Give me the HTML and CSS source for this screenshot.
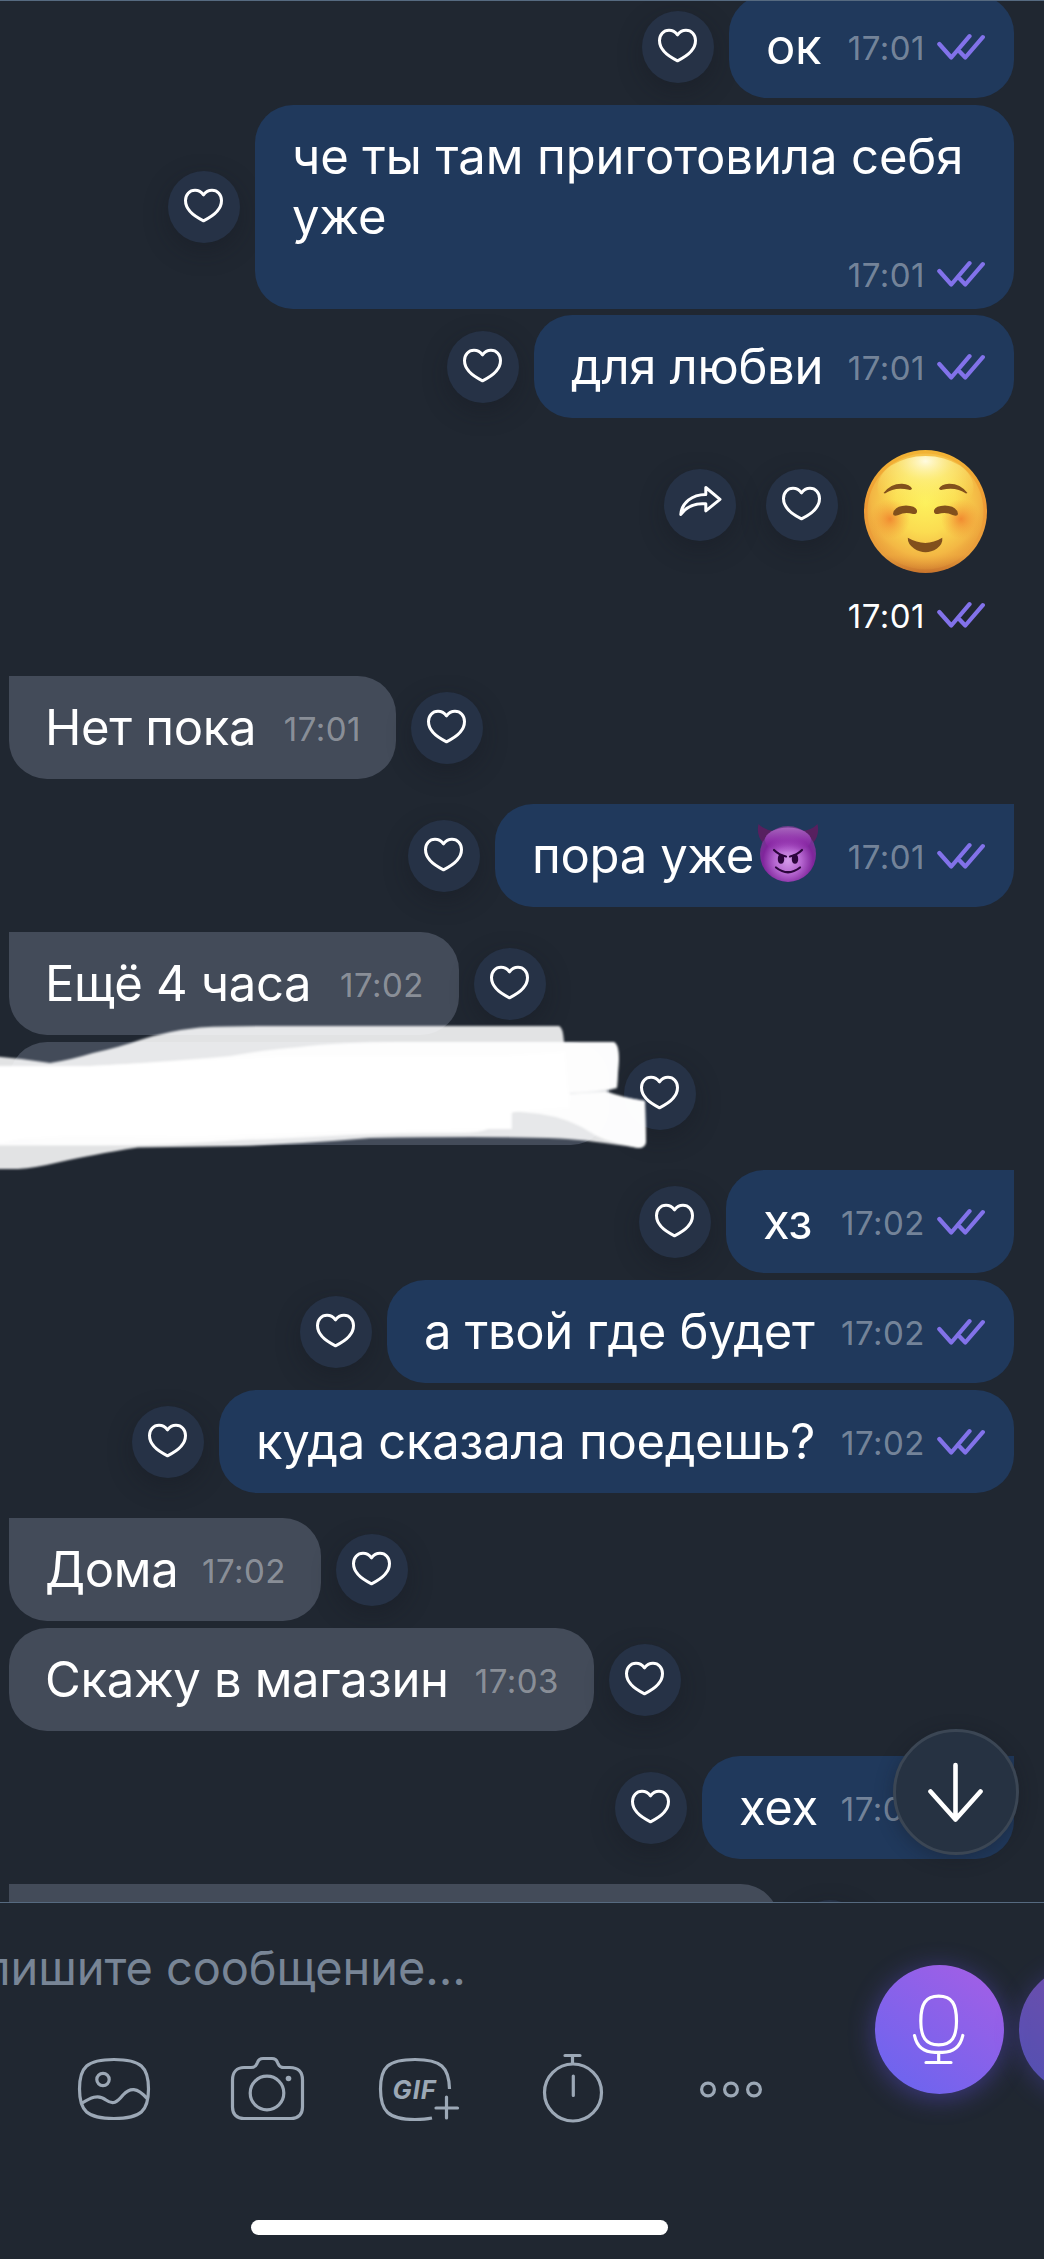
FILE: index.html
```html
<!DOCTYPE html>
<html lang="ru">
<head>
<meta charset="utf-8">
<title>Чат</title>
<link rel="stylesheet" href="styles.css">
</head>
<body>
<svg class="sprite" aria-hidden="true">
  <symbol id="heart" viewBox="0 0 72 72"><path d="M35.5 23.8C33.5 21 30.5 19.3 27 19.3C21.5 19.3 17.5 23.6 17.5 29.6C17.5 38 26 45.3 35.5 49.8C45 45.3 53.5 38 53.5 29.6C53.5 23.6 49.5 19.3 44 19.3C40.5 19.3 37.5 21 35.5 23.8Z"/></symbol>
  <symbol id="share" viewBox="0 0 72 72"><path d="M41.8 18.5L56 30.3L41.8 41.8V34.8C31 33.8 22.500 37.5 16.800 45.500C17.500 34 28 25.500 41.800 25.500Z"/></symbol>
  <symbol id="checks" viewBox="0 0 48 28"><path d="M2.300 11L14.300 24.500L32.500 3.200M22.800 18.700L28.300 24.500L45.800 4.200"/></symbol>
</svg>

<main class="chat">
  <div class="row out">
    <button class="act"><svg><use href="#heart"/></svg></button>
    <div class="bubble w-ok"><p>ок</p><span class="meta"><time>17:01</time><svg class="checks"><use href="#checks"/></svg></span></div>
  </div>
  <div class="row out">
    <button class="act"><svg><use href="#heart"/></svg></button>
    <div class="bubble tall w-che"><p>че ты там приготовила себя<br>уже</p><span class="meta"><time>17:01</time><svg class="checks"><use href="#checks"/></svg></span></div>
  </div>
  <div class="row out tight">
    <button class="act"><svg><use href="#heart"/></svg></button>
    <div class="bubble w-dlya"><p>для любви</p><span class="meta"><time>17:01</time><svg class="checks"><use href="#checks"/></svg></span></div>
  </div>

  <div class="sticker">
    <div class="sticker-line">
      <button class="act"><svg><use href="#share"/></svg></button>
      <button class="act"><svg><use href="#heart"/></svg></button>
      <svg class="smile" viewBox="0 0 123 123">
        <defs>
          <linearGradient id="rim" x1="0" y1="0" x2="0" y2="1"><stop offset="0" stop-color="#f2b434"/><stop offset=".45" stop-color="#ee9a35"/><stop offset=".85" stop-color="#e9a03c"/><stop offset="1" stop-color="#c8742c"/></linearGradient>
          <radialGradient id="face" cx=".5" cy=".42" r=".58"><stop offset="0" stop-color="#fdf15c"/><stop offset=".45" stop-color="#fbdc51"/><stop offset=".8" stop-color="#f3b744"/><stop offset="1" stop-color="#eca43c" stop-opacity=".2"/></radialGradient>
          <radialGradient id="shine" cx=".5" cy=".08" r=".75"><stop offset="0" stop-color="#fffbe0"/><stop offset=".4" stop-color="#fdf48c" stop-opacity=".6"/><stop offset="1" stop-color="#fdf060" stop-opacity="0"/></radialGradient>
          <radialGradient id="blush"><stop offset="0" stop-color="#f07f2c" stop-opacity=".85"/><stop offset="1" stop-color="#f29a38" stop-opacity="0"/></radialGradient>
        </defs>
        <circle cx="61.500" cy="61.500" r="61.500" fill="url(#rim)"/>
        <circle cx="61.500" cy="61.500" r="58" fill="url(#face)"/>
        <ellipse cx="61.500" cy="38" rx="48" ry="32" fill="url(#shine)"/>
        <circle cx="26" cy="69" r="20" fill="url(#blush)"/><circle cx="97" cy="69" r="20" fill="url(#blush)"/>
        <path class="brown" d="M19.500 43Q27 33.500 38 33.800Q46 34.500 48 38.500Q47.500 40.500 45 39.800Q31 36.500 21 43.500ZM103.500 43Q96 33.500 85 33.800Q77 34.500 75 38.500Q75.500 40.500 78 39.800Q92 36.500 102 43.500Z"/>
        <path class="brown" d="M29 64Q30 56 42 55.500Q52 56 53 60.500Q53.500 64.500 49 64Q41 61.500 34.500 65Q29.500 67 29 64ZM94 64Q93 56 81 55.500Q71 56 70 60.500Q69.500 64.500 74 64Q82 61.500 88.500 65Q93.500 67 94 64Z"/>
        <path class="brown" d="M43.800 87.800Q61.500 98 78.300 87.800Q79 94 73 98.500Q61.500 106 50 98.500Q43.500 94 43.800 87.800Z"/>
      </svg>
    </div>
    <span class="meta"><time>17:01</time><svg class="checks"><use href="#checks"/></svg></span>
  </div>

  <div class="row in turn">
    <div class="bubble first w-net"><p>Нет пока</p><span class="meta"><time>17:01</time></span></div>
    <button class="act"><svg><use href="#heart"/></svg></button>
  </div>
  <div class="row out turn">
    <button class="act"><svg><use href="#heart"/></svg></button>
    <div class="bubble first w-pora"><p>пора уже<svg class="imp" viewBox="0 0 62 60">
      <defs>
        <radialGradient id="impf" cx=".5" cy=".62" r=".6"><stop offset="0" stop-color="#d49bea"/><stop offset=".4" stop-color="#b566d0"/><stop offset=".75" stop-color="#80259c"/><stop offset="1" stop-color="#6d3c8c"/></radialGradient>
        <linearGradient id="imps" x1="0" y1="0" x2="0" y2="1"><stop offset="0" stop-color="#a765bd"/><stop offset=".5" stop-color="#9435ae" stop-opacity=".8"/><stop offset="1" stop-color="#8a1aa5" stop-opacity="0"/></linearGradient>
      </defs>
      <path fill="#57205f" d="M1.500 1Q-1 12 6 20L17 8Q7 7 1.500 1ZM60.500 1Q63 12 56 20L45 8Q55 7 60.500 1Z"/>
      <circle cx="31" cy="31" r="28" fill="url(#impf)"/>
      <ellipse cx="31" cy="17" rx="23" ry="12.500" fill="url(#imps)"/>
      <path fill="none" stroke="#2c063c" stroke-width="2.200" stroke-linecap="round" d="M17 27Q22 32 29 33.500M45 27Q40 32 33 33.500M19 44.500Q31 54 43 44.500"/>
      <ellipse cx="24" cy="36" rx="3.200" ry="4.800" fill="#2c063c"/><ellipse cx="38" cy="36" rx="3.200" ry="4.800" fill="#2c063c"/>
    </svg></p><span class="meta"><time>17:01</time><svg class="checks"><use href="#checks"/></svg></span></div>
  </div>
  <div class="row in turn">
    <div class="bubble first w-4h"><p>Ещё 4 часа</p><span class="meta"><time>17:02</time></span></div>
    <button class="act"><svg><use href="#heart"/></svg></button>
  </div>
  <div class="row in">
    <div class="bubble w-hidden"></div>
    <button class="act"><svg><use href="#heart"/></svg></button>
    <svg class="scribble" viewBox="0 1010 660 170">
      <defs><filter id="soft" x="-5%" y="-10%" width="110%" height="120%"><feGaussianBlur stdDeviation="1.200"/></filter></defs>
      <g filter="url(#soft)">
        <path fill="#fff" fill-opacity=".87" d="M-10 1056Q20 1058 50 1063Q70 1060 93 1053Q120 1047 140 1040Q167 1031 200 1027.500Q225 1026 260 1026H559Q563 1027 564 1042H614Q619 1044 619 1060L617 1088L606 1091Q620 1097 645 1101L646 1142Q645 1148 638 1148Q590 1140 560 1138.500Q500 1136 370 1138Q300 1144 240 1146L138 1147.500Q90 1155 60 1162Q35 1168 18 1169H-10Z"/>
        <path fill="#fff" fill-opacity=".9" d="M-10 1066H90Q150 1063 230 1056Q270 1049 300 1047Q340 1042 400 1042H613Q619 1044 618.500 1060L617 1087Q600 1092 570 1093L569 1108L512 1112V1129H488Q480 1133 460 1133Q400 1133 350 1135Q300 1138 240 1140Q170 1145.500 100 1145.500H-10Z"/>
        <path fill="#fff" d="M-10 1066H90L280 1056L500 1056L565 1052L569 1105L540 1107L510 1113V1129H485L350 1132L200 1137L70 1136L20 1139L-10 1146Z"/>
        <path fill="#fff" fill-opacity=".9" d="M512 1111Q530 1094 606 1092Q620 1097 645 1101L646 1142Q645 1148 638 1148Q605 1141 595 1135Q570 1118 540 1114Z"/>
      </g>
    </svg>
  </div>
  <div class="row out turn">
    <button class="act"><svg><use href="#heart"/></svg></button>
    <div class="bubble first w-hz"><p>хз</p><span class="meta"><time>17:02</time><svg class="checks"><use href="#checks"/></svg></span></div>
  </div>
  <div class="row out">
    <button class="act"><svg><use href="#heart"/></svg></button>
    <div class="bubble w-tvoy"><p>а твой где будет</p><span class="meta"><time>17:02</time><svg class="checks"><use href="#checks"/></svg></span></div>
  </div>
  <div class="row out">
    <button class="act"><svg><use href="#heart"/></svg></button>
    <div class="bubble w-kuda"><p>куда сказала поедешь?</p><span class="meta"><time>17:02</time><svg class="checks"><use href="#checks"/></svg></span></div>
  </div>
  <div class="row in turn">
    <div class="bubble first w-doma"><p>Дома</p><span class="meta"><time>17:02</time></span></div>
    <button class="act"><svg><use href="#heart"/></svg></button>
  </div>
  <div class="row in">
    <div class="bubble w-skazhu"><p>Скажу в магазин</p><span class="meta"><time>17:03</time></span></div>
    <button class="act"><svg><use href="#heart"/></svg></button>
  </div>
  <div class="row out turn">
    <button class="act"><svg><use href="#heart"/></svg></button>
    <div class="bubble first w-heh"><p>хех</p><span class="meta"><time>17:03</time><svg class="checks"><use href="#checks"/></svg></span></div>
  </div>
  <div class="row in turn">
    <div class="bubble first w-last"></div>
    <button class="act"></button>
  </div>
  <button class="down"><svg viewBox="0 0 126 126"><path d="M62.500 36V90.500M37.500 62.500L62.500 90.500L87.500 62.500"/></svg></button>
</main>

<footer class="composer">
  <div class="entry">
    <div class="field">пишите сообщение…</div>
    <div class="tools">
      <svg viewBox="37 2050 154 76"><path d="M114 2059.500C141 2059.500 148.500 2067 148.500 2089C148.500 2111 141 2118.500 114 2118.500C87 2118.500 79.500 2111 79.500 2089C79.500 2067 87 2059.500 114 2059.500ZM81.500 2103.500C90 2098 98 2093.500 106 2100C113 2105 117 2102.500 123 2095C130 2087.500 137 2087 147 2098.500"/><circle cx="103" cy="2079.500" r="6.200"/></svg>
      <svg viewBox="191 2050 154 76"><path d="M244 2067.500H251C256 2067.500 256 2065 257.500 2062.500C258.500 2059.500 260 2058.500 263 2058.500H272C275 2058.500 276.500 2059.500 277.500 2062.500C279 2065 279 2067.500 284 2067.500H290C298 2067.500 302.500 2072 302.500 2080V2107C302.500 2114.500 298 2118.500 291 2118.500H244C237 2118.500 232.500 2114.500 232.500 2107V2080C232.500 2072 237 2067.500 244 2067.500Z"/><circle cx="267" cy="2093" r="16.800"/><circle class="dot" cx="288.500" cy="2078.500" r="2.800"/></svg>
      <svg viewBox="345 2050 154 76"><path class="butt" d="M449.500 2089C449 2067 441 2059.500 415 2059.500C388 2059.500 380.500 2067 380.500 2089C380.500 2111 388 2119.500 415 2119.500Q425 2119.500 432 2118"/><path d="M446.500 2097V2118M436 2108H457.500"/><text x="392.500" y="2098.500">GIF</text></svg>
      <svg viewBox="499 2050 154 76"><circle cx="573" cy="2092.500" r="28.500"/><path d="M565 2055.500H580M572.500 2056V2063M573.300 2076V2095.500"/></svg>
      <svg viewBox="653 2050 154 76"><circle cx="708" cy="2089.500" r="6.400"/><circle cx="731" cy="2089.500" r="6.400"/><circle cx="754" cy="2089.500" r="6.400"/></svg>
    </div>
  </div>
  <div class="send">
    <button class="mic"><svg viewBox="0 0 129 129"><path d="M63.700 31.200C77 31.200 81.500 39 81.500 56C81.500 72 77 79.800 63.700 79.800C50.500 79.800 45.800 72 45.800 56C45.800 39 50.500 31.200 63.700 31.200ZM39.500 70.500Q43 87.300 60 87.300H67.500Q84 87.300 87.800 70.500M63.700 88V97M51 97.500H76"/></svg></button>
    <button class="mic next"></button>
  </div>
  <div class="home"></div>
</footer>
</body>
</html>
```

FILE: styles.css
```css
* { box-sizing: border-box; }
body {
  margin: 0;
  width: 1044px;
  height: 2259px;
  overflow: hidden;
  display: flex;
  flex-direction: column;
  background: #202731;
  color: #fff;
  font-family: Inter, "Liberation Sans", sans-serif;
}
.sprite { position: absolute; width: 0; height: 0; }
p { margin: 0; }
button { border: 0; padding: 0; color: inherit; flex: none; }

.chat {
  position: relative;
  height: 1902px;
  border-top: 1px solid #566a80;
  overflow: hidden;
}
.row {
  position: relative;
  display: flex;
  align-items: center;
  gap: 15px;
  margin-top: 7px;
}
.row:first-child { margin-top: -6px; }
.row.tight { margin-top: 6px; }
.row.turn { margin-top: 25px; }
.out { justify-content: flex-end; padding-right: 30px; }
.in { padding-left: 9px; }

.bubble {
  display: flex;
  justify-content: space-between;
  align-items: flex-start;
  height: 103px;
  padding: 22px 35px 0 36px;
  border-radius: 38px;
  font-size: 49px;
  line-height: 60px;
  letter-spacing: -.33px;
  white-space: nowrap;
}
.out .bubble { background: #20395c; padding-right: 29px; padding-left: 37px; }
.in .bubble { background: #434b59; }
.out .first { border-top-right-radius: 0; }
.in .first { border-top-left-radius: 0; }
.bubble.tall { height: 204px; flex-direction: column; justify-content: flex-start; letter-spacing: -.1px; }

.w-ok { width: 285px; }
.w-che { width: 759px; }
.w-dlya { width: 480px; }
.w-net { width: 387px; }
.w-pora { width: 519px; }
.w-4h { width: 450px; }
.w-hidden { width: 600px; }
.w-hz { width: 288px; }
.w-tvoy { width: 627px; }
.w-kuda { width: 795px; }
.w-doma { width: 312px; }
.w-skazhu { width: 585px; }
.w-heh { width: 312px; }
.w-last { width: 770px; }

.meta {
  display: flex;
  gap: 12px;
  font-size: 33px;
  line-height: 40px;
  letter-spacing: .5px;
}
.bubble .meta { padding-top: 11px; color: rgba(255, 255, 255, .4); }
.bubble.tall .meta { align-self: flex-end; padding-top: 8px; }
.checks {
  width: 48px;
  height: 28px;
  margin-top: 5px;
  fill: none;
  stroke: #8272ea;
  stroke-width: 4.2;
  stroke-linecap: round;
  stroke-linejoin: round;
}

.act {
  width: 72px;
  height: 72px;
  border-radius: 50%;
  background: #263246;
  box-shadow: 0 8px 24px rgba(20, 22, 32, .35);
}
.act svg {
  display: block;
  width: 72px;
  height: 72px;
  fill: none;
  stroke: #fff;
  stroke-width: 3;
  stroke-linejoin: round;
}

.sticker {
  height: 233px;
  padding: 32px 29px 0 0;
  display: flex;
  flex-direction: column;
  align-items: flex-end;
}
.sticker-line { display: flex; gap: 30px; padding-right: 28px; height: 146px; }
.sticker-line .act { margin-top: 19px; }
.sticker .meta { padding-right: 30px; }
.smile { width: 123px; height: 123px; margin-left: -4px; }
.brown { fill: #82501c; }
.imp { width: 62px; height: 60px; vertical-align: -5px; margin: -14px 0 -5px 3px; }

.scribble {
  position: absolute;
  left: 0;
  top: -32px;
  width: 660px;
  height: 170px;
}

.down {
  position: absolute;
  left: 893px;
  top: 1728px;
  width: 126px;
  height: 126px;
  border: 3px solid #3b4654;
  border-radius: 50%;
  background: #263242;
  box-shadow: 0 4px 18px rgba(20, 22, 32, .35);
}
.down svg {
  display: block;
  width: 126px;
  height: 126px;
  margin: -3px;
  fill: none;
  stroke: #fff;
  stroke-width: 4.6;
  stroke-linecap: round;
  stroke-linejoin: round;
}

.composer {
  height: 357px;
  border-top: 1px solid #566a80;
  display: grid;
  grid-template-columns: 875px 169px;
  grid-template-rows: 317px 15px;
}
.entry { padding-top: 35px; overflow: hidden; }
.field {
  margin-left: -17px;
  font-size: 47px;
  line-height: 60px;
  letter-spacing: -.1px;
  color: #788596;
  white-space: nowrap;
}
.tools { display: flex; padding: 52px 0 0 37px; }
.tools svg {
  flex: none;
  width: 154px;
  height: 76px;
  fill: none;
  stroke: #9ca8b6;
  stroke-width: 3.2;
  stroke-linecap: round;
  stroke-linejoin: round;
}
.tools .dot { fill: #9ca8b6; stroke: none; }
.tools .butt { stroke-linecap: butt; }
.tools text {
  fill: #9ca8b6;
  stroke: none;
  font-size: 25.5px;
  font-weight: 700;
  font-style: italic;
  letter-spacing: 1px;
}
.send { display: flex; gap: 15px; padding-top: 62px; overflow: hidden; margin-left: -40px; padding-left: 40px; }
.mic {
  width: 129px;
  height: 129px;
  border-radius: 50%;
  background: linear-gradient(35deg, #7064ee 15%, #a05fe6 90%);
  box-shadow: 0 4px 26px rgba(100, 80, 230, .45);
}
.mic svg {
  display: block;
  width: 129px;
  height: 129px;
  fill: none;
  stroke: #fff;
  stroke-width: 3.2;
  stroke-linecap: round;
  stroke-linejoin: round;
}
.next { opacity: .68; }
.home {
  grid-column: 1 / -1;
  width: 417px;
  height: 15px;
  margin-left: 251px;
  border-radius: 8px;
  background: #fff;
}
```
